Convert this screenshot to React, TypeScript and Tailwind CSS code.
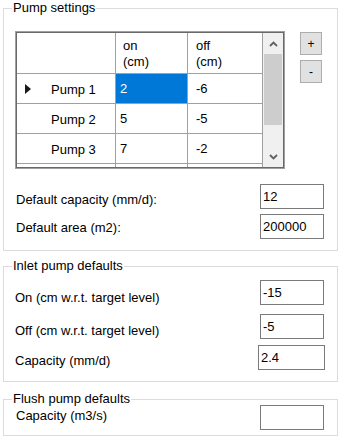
import React from 'react';

const rows = [
  { name: 'Pump 1', on: '2', off: '-6', current: true },
  { name: 'Pump 2', on: '5', off: '-5', current: false },
  { name: 'Pump 3', on: '7', off: '-2', current: false },
];

function ValueBox({ value, className = '' }: { value: string; className?: string }) {
  return (
    <div className={`h-[25px] w-[64px] border border-[#7a7a7a] bg-white pl-[2px] flex items-center leading-[16px] ${className}`}>
      {value}
    </div>
  );
}

function Chevron({ down }: { down?: boolean }) {
  return (
    <svg width="9" height="6" viewBox="0 0 9 6" className="block">
      <path
        d={down ? 'M1 1 L4.5 4.5 L8 1' : 'M1 5 L4.5 1.5 L8 5'}
        fill="none"
        stroke="#606060"
        strokeWidth="1.8"
      />
    </svg>
  );
}

function PumpGrid() {
  return (
    <div className="w-[270px] h-[138px] border border-[#a0a0a0]">
      <div className="w-full h-full border border-[#696969] flex bg-white">
        <div className="w-[246px] h-full overflow-hidden">
          <div className="grid grid-cols-[99px_72px_75px]">
            {/* header row */}
            <div className="h-[41px] border-r border-b border-[#a0a0a0]" />
            <div className="h-[41px] border-r border-b border-[#a0a0a0] pl-[7px] pt-[5px] leading-[16px]">
              on
              <br />
              (cm)
            </div>
            <div className="h-[41px] border-r border-b border-[#a0a0a0] pl-[8px] pt-[5px] leading-[16px]">
              off
              <br />
              (cm)
            </div>
            {rows.map((r) => (
              <React.Fragment key={r.name}>
                <div className="h-[30px] border-r border-b border-[#a0a0a0] flex items-center pl-[8px]">
                  {r.current ? (
                    <svg width="6" height="10" viewBox="0 0 6 10" className="block">
                      <path d="M0 0 L6 5 L0 10 Z" fill="#1a1a1a" />
                    </svg>
                  ) : (
                    <span className="w-[6px]" />
                  )}
                  <span className="ml-[20px] pt-[3px]">{r.name}</span>
                </div>
                <div
                  className={`h-[30px] border-r border-b border-[#a0a0a0] flex items-center pl-[4px] ${
                    r.current ? 'bg-[#0078d7] text-white' : ''
                  }`}
                >
                  {r.on}
                </div>
                <div className="h-[30px] border-r border-b border-[#a0a0a0] flex items-center pl-[8px]">
                  {r.off}
                </div>
              </React.Fragment>
            ))}
            <div className="h-[10px] border-r border-[#a0a0a0]" />
            <div className="h-[10px] border-r border-[#a0a0a0]" />
            <div className="h-[10px] border-r border-[#a0a0a0]" />
          </div>
        </div>
        {/* vertical scrollbar */}
        <div className="w-[20px] h-full bg-[#f0f0f0] flex flex-col">
          <div className="h-[21px] flex items-center justify-center">
            <Chevron />
          </div>
          <div className="h-[71px] mx-[1px] bg-[#cdcdcd]" />
          <div className="flex-1" />
          <div className="h-[21px] flex items-center justify-center">
            <Chevron down />
          </div>
        </div>
      </div>
    </div>
  );
}

export default function App() {
  return (
    <div
      className="w-[341px] h-[439px] bg-white text-black text-[13px] leading-[16px] pl-[3px] pr-[3px] overflow-hidden"
      style={{ fontFamily: '"Liberation Sans", Arial, sans-serif' }}
    >
      <fieldset className="border border-[#dcdcdc] pb-[11px] min-w-0">
        <legend className="ml-[8px] px-[1px] leading-[16px]">Pump settings</legend>
        <div className="flex pl-[11px] mt-[15px]">
          <PumpGrid />
          <div className="ml-[15px] mt-[1px] flex flex-col gap-[5px]">
            <button className="w-[22px] h-[23px] bg-[#e1e1e1] border border-[#adadad] text-[12px] leading-none flex items-center justify-center">
              +
            </button>
            <button className="w-[22px] h-[23px] bg-[#e1e1e1] border border-[#adadad] text-[12px] leading-none flex items-center justify-center">
              -
            </button>
          </div>
        </div>
        <div className="mt-[15px] flex flex-col gap-[5px] pl-[12px] pr-[13px]">
          <div className="flex justify-between items-start">
            <span className="pt-[8px]">Default capacity (mm/d):</span>
            <ValueBox value="12" />
          </div>
          <div className="flex justify-between items-start">
            <span className="pt-[6px]">Default area (m2):</span>
            <ValueBox value="200000" />
          </div>
        </div>
      </fieldset>

      <fieldset className="mt-[7px] border border-[#dcdcdc] pb-[11px] min-w-0">
        <legend className="ml-[8px] px-[1px] leading-[16px]">Inlet pump defaults</legend>
        <div className="mt-[6px] flex flex-col pl-[11px] pr-[13px]">
          <div className="flex justify-between items-start">
            <span className="pt-[10px]">On (cm w.r.t. target level)</span>
            <ValueBox value="-15" />
          </div>
          <div className="mt-[8px] flex justify-between items-start">
            <span className="pt-[9px]">Off (cm w.r.t. target level)</span>
            <ValueBox value="-5" />
          </div>
          <div className="mt-[6px] flex justify-between items-start">
            <span className="pt-[8px]">Capacity (mm/d)</span>
            <ValueBox value="2.4" className="w-[67px] -mr-[1px]" />
          </div>
        </div>
      </fieldset>

      <fieldset className="mt-[9px] border border-[#dcdcdc] pb-[5px] min-w-0">
        <legend className="ml-[8px] px-[1px] leading-[16px]">Flush pump defaults</legend>
        <div className="-mt-[2px] flex justify-between items-start pl-[12px] pr-[13px]">
          <span className="pt-[3px]">Capacity (m3/s)</span>
          <ValueBox value="" className="h-[24px]" />
        </div>
      </fieldset>
    </div>
  );
}
